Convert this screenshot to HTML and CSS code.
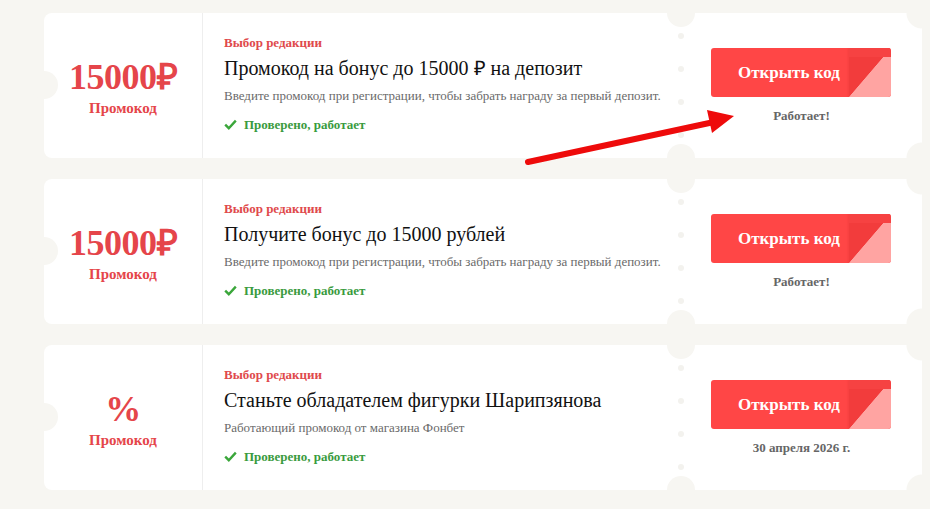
FILE: index.html
```html
<!DOCTYPE html>
<html lang="ru">
<head>
<meta charset="utf-8">
<title>Промокоды</title>
<link rel="stylesheet" href="styles.css">
</head>
<body>
<div class="list">
  <div class="card">
    <div class="amount">
      <div class="amount-value">15000₽</div>
      <div class="amount-label">Промокод</div>
    </div>
    <div class="info">
      <div class="tag">Выбор редакции</div>
      <div class="title">Промокод на бонус до 15000 ₽ на депозит</div>
      <div class="desc">Введите промокод при регистрации, чтобы забрать награду за первый депозит.</div>
      <div class="verified"><svg class="check" width="13" height="11" viewBox="0 0 13 11"><path d="M1.2 5.6 L4.8 9.2 L11.8 1.6" fill="none" stroke="#3aa63a" stroke-width="2.4"/></svg>Проверено, работает</div>
    </div>
    <div class="stub">
      <div class="dots"><i></i><i></i><i></i><i></i></div>
      <div class="btn"><span>Открыть код</span><b class="peel"></b></div>
      <div class="status">Работает!</div>
    </div>
  </div>
  <div class="card">
    <div class="amount">
      <div class="amount-value">15000₽</div>
      <div class="amount-label">Промокод</div>
    </div>
    <div class="info">
      <div class="tag">Выбор редакции</div>
      <div class="title">Получите бонус до 15000 рублей</div>
      <div class="desc">Введите промокод при регистрации, чтобы забрать награду за первый депозит.</div>
      <div class="verified"><svg class="check" width="13" height="11" viewBox="0 0 13 11"><path d="M1.2 5.6 L4.8 9.2 L11.8 1.6" fill="none" stroke="#3aa63a" stroke-width="2.4"/></svg>Проверено, работает</div>
    </div>
    <div class="stub">
      <div class="dots"><i></i><i></i><i></i><i></i></div>
      <div class="btn"><span>Открыть код</span><b class="peel"></b></div>
      <div class="status">Работает!</div>
    </div>
  </div>
  <div class="card">
    <div class="amount">
      <div class="amount-value">%</div>
      <div class="amount-label">Промокод</div>
    </div>
    <div class="info">
      <div class="tag">Выбор редакции</div>
      <div class="title">Станьте обладателем фигурки Шарипзянова</div>
      <div class="desc">Работающий промокод от магазина Фонбет</div>
      <div class="verified"><svg class="check" width="13" height="11" viewBox="0 0 13 11"><path d="M1.2 5.6 L4.8 9.2 L11.8 1.6" fill="none" stroke="#3aa63a" stroke-width="2.4"/></svg>Проверено, работает</div>
    </div>
    <div class="stub">
      <div class="dots"><i></i><i></i><i></i><i></i></div>
      <div class="btn"><span>Открыть код</span><b class="peel"></b></div>
      <div class="status">30 апреля 2026 г.</div>
    </div>
  </div>
</div>
<svg class="arrow" width="930" height="509" viewBox="0 0 930 509">
  <line x1="528" y1="162" x2="714" y2="122" stroke="#ee0b0b" stroke-width="6" stroke-linecap="round"/>
  <polygon points="734,116 707,110 712,133" fill="#ee0b0b"/>
</svg>
</body>
</html>
```
FILE: styles.css
```css
html, body {
  margin: 0;
  padding: 0;
}
body {
  background: #f7f6f2;
  font-family: "Liberation Serif", "Times New Roman", serif;
  width: 930px;
  height: 509px;
  overflow: hidden;
  position: relative;
}
.list {
  display: flex;
  flex-direction: column;
  gap: 21px;
  padding: 13px 0 0 44px;
  width: 878px;
}
.card {
  position: relative;
  display: flex;
  height: 145px;
  background: #fff;
  border-radius: 8px 0 0 8px;
}
.card::before {
  content: "";
  position: absolute;
  left: -14px;
  top: 58px;
  width: 28px;
  height: 28px;
  border-radius: 50%;
  background: #f7f6f2;
}
.amount {
  width: 159px;
  border-right: 1px solid #eeeeee;
  display: flex;
  flex-direction: column;
  align-items: center;
  justify-content: center;
  padding-top: 4px;
  box-sizing: border-box;
  color: #e5454a;
  font-weight: bold;
}
.amount-value {
  font-size: 36px;
  line-height: 38px;
  letter-spacing: -0.5px;
}
.amount-label {
  font-size: 15px;
  line-height: 20px;
  margin-top: 2px;
}
.info {
  width: 478px;
  box-sizing: border-box;
  padding: 22px 0 0 21px;
}
.tag {
  color: #e04a4c;
  font-weight: bold;
  font-size: 13px;
  line-height: 16px;
}
.title {
  color: #111;
  font-size: 20px;
  line-height: 24px;
  margin-top: 5px;
}
.desc {
  color: #6a6a6a;
  font-size: 13px;
  line-height: 16px;
  margin-top: 8px;
}
.verified {
  display: flex;
  align-items: center;
  gap: 7px;
  color: #3a9b3e;
  font-weight: bold;
  font-size: 13px;
  line-height: 16px;
  margin-top: 13px;
}
.check {
  display: block;
  margin-top: -1px;
}
.stub {
  position: relative;
  flex: 1;
  display: flex;
  flex-direction: column;
  align-items: center;
  padding-top: 35px;
  box-sizing: border-box;
  background:
    radial-gradient(circle at 100% 0, #f7f6f2 15px, transparent 16px),
    radial-gradient(circle at 100% 100%, #f7f6f2 15px, transparent 16px),
    #fff;
}
.stub::before,
.stub::after {
  content: "";
  position: absolute;
  left: -14px;
  width: 28px;
  height: 28px;
  border-radius: 50%;
  background: #f7f6f2;
}
.stub::before { top: -14px; }
.stub::after { bottom: -14px; }
.dots {
  position: absolute;
  left: -3px;
  top: 20px;
  display: flex;
  flex-direction: column;
  gap: 27px;
}
.dots i {
  display: block;
  width: 6px;
  height: 6px;
  border-radius: 50%;
  background: #f3f2ee;
}
.btn {
  position: relative;
  width: 180px;
  height: 49px;
  margin-left: -1px;
  background: #ff4646;
  border-radius: 3px;
  display: flex;
  align-items: center;
  box-sizing: border-box;
  padding-left: 27px;
  overflow: hidden;
}
.btn span {
  color: #fff;
  font-weight: bold;
  font-size: 17px;
  line-height: 20px;
}
.peel {
  position: absolute;
  right: 0;
  top: 0;
  width: 42px;
  height: 49px;
  background:
    linear-gradient(to top left, #ffa4a2 49.5%, #f23c3c 50.5%);
  box-shadow: -1px 0 2px rgba(180, 30, 30, 0.15);
}
.peel::before {
  content: "";
  position: absolute;
  left: 0;
  top: 0;
  right: 0;
  height: 9px;
  background: #f64242;
}
.status {
  margin-top: 11px;
  color: #666;
  font-weight: bold;
  font-size: 13px;
  line-height: 16px;
}
.arrow {
  position: absolute;
  left: 0;
  top: 0;
  pointer-events: none;
}
```
